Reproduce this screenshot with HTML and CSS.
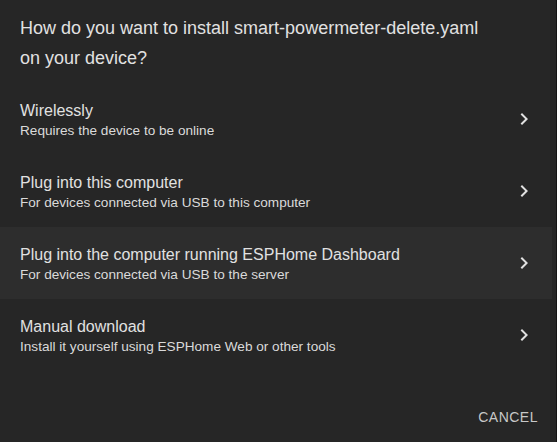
FILE: index.html
```html
<!DOCTYPE html>
<html>
<head>
<meta charset="utf-8">
<link rel="stylesheet" href="styles.css">
</head>
<body>
<div class="dialog">
  <h2 class="title">How do you want to install smart-powermeter-delete.yaml on your device?</h2>
  <ul class="list">
    <li class="item">
      <div class="text">
        <span class="primary">Wirelessly</span>
        <span class="secondary">Requires the device to be online</span>
      </div>
      <svg class="chev" viewBox="0 0 24 24"><path d="M8.59,16.58L13.17,12L8.59,7.41L10,6L16,12L10,18L8.59,16.58Z"/></svg>
    </li>
    <li class="item">
      <div class="text">
        <span class="primary">Plug into this computer</span>
        <span class="secondary">For devices connected via USB to this computer</span>
      </div>
      <svg class="chev" viewBox="0 0 24 24"><path d="M8.59,16.58L13.17,12L8.59,7.41L10,6L16,12L10,18L8.59,16.58Z"/></svg>
    </li>
    <li class="item hover">
      <div class="text">
        <span class="primary">Plug into the computer running ESPHome Dashboard</span>
        <span class="secondary">For devices connected via USB to the server</span>
      </div>
      <svg class="chev" viewBox="0 0 24 24"><path d="M8.59,16.58L13.17,12L8.59,7.41L10,6L16,12L10,18L8.59,16.58Z"/></svg>
    </li>
    <li class="item">
      <div class="text">
        <span class="primary">Manual download</span>
        <span class="secondary">Install it yourself using ESPHome Web or other tools</span>
      </div>
      <svg class="chev" viewBox="0 0 24 24"><path d="M8.59,16.58L13.17,12L8.59,7.41L10,6L16,12L10,18L8.59,16.58Z"/></svg>
    </li>
  </ul>
  <div class="actions">
    <button class="btn">Cancel</button>
  </div>
</div>
</body>
</html>
```
FILE: styles.css
```css
html, body {
  margin: 0;
  padding: 0;
  background: #141414;
}
body {
  width: 557px;
  height: 442px;
  overflow: hidden;
  font-family: "Liberation Sans", Arial, sans-serif;
}
.dialog {
  width: 556px;
  height: 442px;
  background: #262626;
  display: flex;
  flex-direction: column;
}
.title {
  margin: 0;
  padding: 13px 60px 0 20px;
  font-size: 18px;
  font-weight: 400;
  line-height: 30px;
  color: #e1e1e1;
  height: 83px;
  box-sizing: border-box;
}
.list {
  list-style: none;
  margin: 0;
  padding: 0;
  width: 552px;
}
.item {
  height: 72px;
  display: flex;
  align-items: center;
  padding: 3px 16px 0 20px;
  box-sizing: border-box;
}
.item.hover {
  background: #2d2d2d;
}
.text {
  flex: 1;
  display: flex;
  flex-direction: column;
}
.primary {
  font-size: 16px;
  line-height: 20px;
  color: #e1e1e1;
}
.secondary {
  font-size: 13.6px;
  line-height: 20px;
  color: #dadada;
}
.chev {
  width: 24px;
  height: 24px;
  fill: #e1e1e1;
  margin-top: -3px;
}
.actions {
  display: flex;
  justify-content: flex-end;
  padding: 28px 10px 0 0;
}
.btn {
  background: none;
  border: none;
  font-family: "Liberation Sans", Arial, sans-serif;
  font-size: 14px;
  font-weight: 500;
  letter-spacing: 0.5px;
  text-transform: uppercase;
  color: #c8c8c8;
  padding: 0 8px;
  height: 36px;
}
```
